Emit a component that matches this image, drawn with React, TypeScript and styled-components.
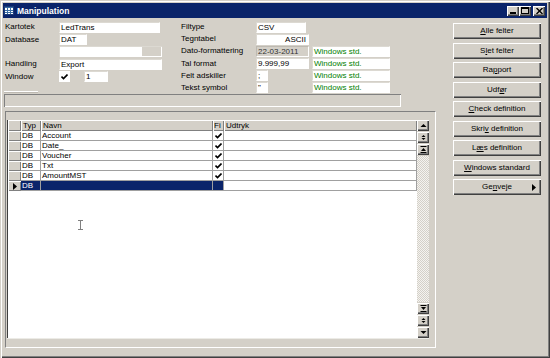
import React from "react";
import styled, { createGlobalStyle, css } from "styled-components";

const GlobalStyle = createGlobalStyle`
  html, body { margin: 0; padding: 0; background: #d4d0c8; }
  body {
    font-family: "Liberation Sans", Arial, sans-serif;
    font-size: 8px;
    color: #000;
  }
  * { box-sizing: border-box; }
`;

const raised = css`
  background: #d4d0c8;
  box-shadow: inset 1px 1px #fff, inset -1px -1px #404040, inset -2px -2px #808080;
`;

const Window = styled.div`
  position: relative;
  width: 550px;
  height: 358px;
  padding: 3px;
  background: #d4d0c8;
  box-shadow: inset 1px 1px #d4d0c8, inset 2px 2px #fff, inset -1px -1px #404040,
    inset -2px -2px #808080;
  display: flex;
  flex-direction: column;
  overflow: hidden;
`;

const TitleBar = styled.div`
  height: 15px;
  background: #0a246a;
  display: flex;
  align-items: center;
  padding: 0 2px 0 1px;
  color: #fff;
  font-weight: bold;
  font-size: 8.5px;
`;

const TitleText = styled.span`
  margin-left: 3px;
`;

const WinButtons = styled.div`
  margin-left: auto;
  display: flex;
  gap: 0;
`;

const WinButton = styled.div<{ $gap?: number }>`
  ${raised};
  width: 12px;
  height: 10px;
  margin-left: ${(p) => p.$gap || 0}px;
  display: flex;
  align-items: center;
  justify-content: center;
`;

const Main = styled.div`
  flex: 1;
  display: flex;
  padding-top: 3px;
`;

const LeftPane = styled.div`
  width: 432px;
  margin-left: 1px;
  display: flex;
  flex-direction: column;
`;

const FormArea = styled.div`
  height: 73px;
  display: flex;
`;

const LeftForm = styled.div`
  width: 177px;
  padding-left: 1px;
  display: flex;
  flex-direction: column;
`;

const MiddleForm = styled.div`
  display: flex;
  flex-direction: column;
`;

const Row = styled.div<{ $label: number }>`
  height: 12.4px;
  display: grid;
  grid-template-columns: ${(p) => p.$label}px auto;
  align-items: center;
`;

const Label = styled.span`
  white-space: nowrap;
  line-height: 10px;
`;

const Fields = styled.div`
  display: flex;
  align-items: center;
`;

const Field = styled.div<{ $w: number; $grey?: boolean; $right?: boolean }>`
  width: ${(p) => p.$w}px;
  height: 11px;
  line-height: 10px;
  padding: 0 2px 0 1px;
  white-space: nowrap;
  overflow: hidden;
  text-align: ${(p) => (p.$right ? "right" : "left")};
  background: ${(p) => (p.$grey ? "#d4d0c8" : "#fff")};
  color: ${(p) => (p.$grey ? "#333" : "#000")};
  border-top: 1px solid ${(p) => (p.$grey ? "#bdb9b1" : "#dcd9d2")};
  border-left: 1px solid ${(p) => (p.$grey ? "#bdb9b1" : "#dcd9d2")};
  border-right: 1px solid #fff;
  border-bottom: 1px solid #fff;
`;

const Slot = styled.div`
  width: 56px;
`;

const GreenBox = styled(Field)`
  color: #008000;
`;

const ComboBlank = styled.div`
  width: 103px;
  height: 11px;
  display: flex;
  border-top: 1px solid #dcd9d2;
  border-left: 1px solid #dcd9d2;
`;

const ComboWhite = styled.div`
  flex: 1;
  background: #fff;
`;

const ComboGrey = styled.div`
  width: 20px;
  background: #d4d0c8;
  border-right: 1px solid #fff;
  border-bottom: 1px solid #fff;
`;

const CheckBox = styled.div`
  width: 11px;
  height: 11px;
  background: #fff;
  display: flex;
  align-items: center;
  justify-content: center;
  margin-right: 14px;
`;

const Splitter = styled.div`
  width: 34px;
  height: 2px;
  margin-top: 8px;
  margin-left: -1px;
  border-top: 1px solid #fff;
  border-bottom: 1px solid #bdb9b1;
`;

const StatusPanel = styled.div`
  width: 397px;
  height: 13px;
  box-shadow: inset 1px 1px #808080, inset -1px -1px #fff;
`;

const GridFrame = styled.div`
  width: 431px;
  height: 237px;
  margin: 4px 0 0 1px;
  border-top: 1px solid #808080;
  border-left: 1px solid #808080;
  border-right: 1px solid #fff;
  border-bottom: 1px solid #fff;
  padding: 8px 6px 8px 1px;
`;

const Grid = styled.div`
  width: 422px;
  height: 219px;
  display: flex;
  border-bottom: 1px solid #ecebe6;
`;

const Table = styled.div`
  position: relative;
  flex: 1;
  background: #fff;
  border-left: 1px solid #404040;
  display: grid;
  grid-template-columns: 13px 20px 172px 11px 1fr;
  grid-template-rows: 11px;
  grid-auto-rows: 10px;
  align-content: start;
`;

const HeadCell = styled.div`
  ${raised};
  box-shadow: inset 1px 1px #fff, inset -1px -1px #808080;
  line-height: 11px;
  padding-left: 2px;
  white-space: nowrap;
  overflow: hidden;
`;

const Indicator = styled.div`
  background: #d4d0c8;
  box-shadow: inset 1px 1px #fff, inset -1px -1px #808080;
  display: flex;
  align-items: center;
  justify-content: center;
`;

const Cell = styled.div<{ $sel?: boolean; $center?: boolean }>`
  background: ${(p) => (p.$sel ? "#0a246a" : "#fff")};
  color: ${(p) => (p.$sel ? "#fff" : "#000")};
  border-right: 1px solid #a0a0a0;
  border-bottom: 1px solid #a0a0a0;
  line-height: 9px;
  padding-left: 1px;
  white-space: nowrap;
  overflow: hidden;
  display: flex;
  align-items: center;
  justify-content: ${(p) => (p.$center ? "center" : "flex-start")};
`;

const Cursor = styled.div`
  position: absolute;
  left: 70px;
  top: 100px;
`;

const ScrollBar = styled.div`
  width: 12px;
  display: flex;
  flex-direction: column;
`;

const ScrollBtn = styled.div<{ $top?: boolean }>`
  ${raised};
  height: 11px;
  flex: none;
  margin: ${(p) => (p.$top ? "0 0 1px" : "1px 0 0")};
  display: flex;
  align-items: center;
  justify-content: center;
`;

const Track = styled.div`
  flex: 1;
  background-color: #fff;
  background-image: repeating-conic-gradient(#d4d0c8 0 25%, #f4f3f0 0 50%);
  background-size: 2px 2px;
`;

const RightPane = styled.div`
  width: 88px;
  margin-left: 17px;
  padding-top: 2px;
  display: flex;
  flex-direction: column;
  gap: 3.5px;
`;

const Button = styled.div`
  ${raised};
  position: relative;
  height: 16px;
  display: flex;
  align-items: center;
  justify-content: center;
  white-space: nowrap;
  padding-bottom: 1px;
`;

const Arrow = styled.span`
  position: absolute;
  right: 5px;
  top: 5px;
  display: flex;
`;

const Check = () => (
  <svg width="7" height="6" viewBox="0 0 7 6">
    <path d="M0.5 2.5 L2.5 4.5 L6.5 0.5" fill="none" stroke="#000" strokeWidth="1.6" />
  </svg>
);

const Tri = ({ dir }: { dir: "up" | "down" | "right" }) => {
  if (dir === "right")
    return (
      <svg width="4" height="7" viewBox="0 0 4 7">
        <path d="M0 0 L4 3.5 L0 7 Z" fill="#000" />
      </svg>
    );
  return (
    <svg width="7" height="4" viewBox="0 0 7 4">
      <path d={dir === "up" ? "M0 4 L3.5 0 L7 4 Z" : "M0 0 L3.5 4 L7 0 Z"} fill="#000" />
    </svg>
  );
};

const ScrollGlyph = ({ kind }: { kind: "up" | "down" | "both" | "top" | "bottom" }) => (
  <svg width="7" height="7" viewBox="0 0 7 7">
    {kind === "up" && <path d="M0.5 5 L3.5 2 L6.5 5 Z" fill="#000" />}
    {kind === "down" && <path d="M0.5 2 L3.5 5 L6.5 2 Z" fill="#000" />}
    {kind === "both" && (
      <>
        <path d="M1.5 3 L3.5 1 L5.5 3 Z" fill="#000" />
        <path d="M1.5 4 L3.5 6 L5.5 4 Z" fill="#000" />
      </>
    )}
    {kind === "top" && (
      <>
        <rect x="0.5" y="0" width="6" height="1" fill="#000" />
        <path d="M1 5 L3.5 2 L6 5 Z" fill="#000" />
        <rect x="0.5" y="6" width="6" height="1" fill="#000" />
      </>
    )}
    {kind === "bottom" && (
      <>
        <rect x="0.5" y="0" width="6" height="1" fill="#000" />
        <path d="M1 2 L3.5 5 L6 2 Z" fill="#000" />
        <rect x="0.5" y="6" width="6" height="1" fill="#000" />
      </>
    )}
  </svg>
);

const rows = ["Account", "Date_", "Voucher", "Txt", "AmountMST"];

const buttons: [string, string, string][] = [
  ["", "A", "lle felter"],
  ["S", "l", "et felter"],
  ["Ra", "p", "port"],
  ["Udf", "ø", "r"],
  ["", "C", "heck definition"],
  ["Skri", "v", " definition"],
  ["L", "æ", "s definition"],
  ["", "W", "indows standard"],
  ["Ge", "n", "veje"],
];

export default function App() {
  return (
    <>
      <GlobalStyle />
      <Window>
        <TitleBar>
          <svg width="10" height="9" viewBox="0 0 10 9">
            <rect x="0" y="0" width="10" height="9" fill="#fff" />
            <rect x="0" y="0" width="10" height="2" fill="#3a6ea5" />
            <path d="M0 4.5 H10 M0 6.5 H10 M3.5 2 V9 M6.5 2 V9" stroke="#3a6ea5" strokeWidth="1" />
            <rect x="0.5" y="0.5" width="9" height="8" fill="none" stroke="#1c3c78" strokeWidth="1" />
          </svg>
          <TitleText>Manipulation</TitleText>
          <WinButtons>
            <WinButton>
              <svg width="6" height="6" viewBox="0 0 6 6">
                <rect x="0" y="4" width="6" height="2" fill="#000" />
              </svg>
            </WinButton>
            <WinButton>
              <svg width="8" height="7" viewBox="0 0 8 7">
                <rect x="0.5" y="0.5" width="7" height="6" fill="none" stroke="#000" />
                <rect x="0" y="0" width="8" height="2" fill="#000" />
              </svg>
            </WinButton>
            <WinButton $gap={2}>
              <svg width="7" height="6" viewBox="0 0 7 6">
                <path d="M0.5 0 L6.5 6 M6.5 0 L0.5 6" stroke="#000" strokeWidth="1.4" />
              </svg>
            </WinButton>
          </WinButtons>
        </TitleBar>

        <Main>
          <LeftPane>
            <FormArea>
              <LeftForm>
                <Row $label={54}>
                  <Label>Kartotek</Label>
                  <Field $w={101}>LedTrans</Field>
                </Row>
                <Row $label={54}>
                  <Label>Database</Label>
                  <Field $w={28}>DAT</Field>
                </Row>
                <Row $label={54}>
                  <Label />
                  <ComboBlank>
                    <ComboWhite />
                    <ComboGrey />
                  </ComboBlank>
                </Row>
                <Row $label={54}>
                  <Label>Handling</Label>
                  <Field $w={103}>Export</Field>
                </Row>
                <Row $label={54}>
                  <Label>Window</Label>
                  <Fields>
                    <CheckBox>
                      <Check />
                    </CheckBox>
                    <Field $w={24}>1</Field>
                  </Fields>
                </Row>
                <Splitter />
              </LeftForm>

              <MiddleForm>
                <Row $label={75}>
                  <Label>Filtype</Label>
                  <Field $w={50}>CSV</Field>
                </Row>
                <Row $label={75}>
                  <Label>Tegntabel</Label>
                  <Field $w={53} $right>
                    ASCII
                  </Field>
                </Row>
                <Row $label={75}>
                  <Label>Dato-formattering</Label>
                  <Fields>
                    <Slot>
                      <Field $w={53} $grey>
                        22-03-2011
                      </Field>
                    </Slot>
                    <GreenBox $w={78}>Windows std.</GreenBox>
                  </Fields>
                </Row>
                <Row $label={75}>
                  <Label>Tal format</Label>
                  <Fields>
                    <Slot>
                      <Field $w={53}>9.999,99</Field>
                    </Slot>
                    <GreenBox $w={78}>Windows std.</GreenBox>
                  </Fields>
                </Row>
                <Row $label={75}>
                  <Label>Felt adskiller</Label>
                  <Fields>
                    <Slot>
                      <Field $w={12}>;</Field>
                    </Slot>
                    <GreenBox $w={78}>Windows std.</GreenBox>
                  </Fields>
                </Row>
                <Row $label={75}>
                  <Label>Tekst symbol</Label>
                  <Fields>
                    <Slot>
                      <Field $w={12}>"</Field>
                    </Slot>
                    <GreenBox $w={78}>Windows std.</GreenBox>
                  </Fields>
                </Row>
              </MiddleForm>
            </FormArea>

            <StatusPanel />

            <GridFrame>
              <Grid>
                <Table>
                  <HeadCell />
                  <HeadCell>Typ</HeadCell>
                  <HeadCell>Navn</HeadCell>
                  <HeadCell style={{ paddingLeft: 1 }}>Fi</HeadCell>
                  <HeadCell>Udtryk</HeadCell>
                  {rows.map((name) => (
                    <React.Fragment key={name}>
                      <Indicator />
                      <Cell>DB</Cell>
                      <Cell>{name}</Cell>
                      <Cell $center>
                        <Check />
                      </Cell>
                      <Cell />
                    </React.Fragment>
                  ))}
                  <Indicator>
                    <Tri dir="right" />
                  </Indicator>
                  <Cell $sel>DB</Cell>
                  <Cell $sel />
                  <Cell $sel />
                  <Cell />
                  <Cursor>
                    <svg width="5" height="10" viewBox="0 0 5 10">
                      <path d="M0 0.5 H5 M0 9.5 H5 M2.5 0 V10" stroke="#808080" strokeWidth="1" />
                    </svg>
                  </Cursor>
                </Table>
                <ScrollBar>
                  <ScrollBtn $top>
                    <ScrollGlyph kind="up" />
                  </ScrollBtn>
                  <ScrollBtn $top>
                    <ScrollGlyph kind="both" />
                  </ScrollBtn>
                  <ScrollBtn $top>
                    <ScrollGlyph kind="top" />
                  </ScrollBtn>
                  <Track />
                  <ScrollBtn>
                    <ScrollGlyph kind="bottom" />
                  </ScrollBtn>
                  <ScrollBtn>
                    <ScrollGlyph kind="both" />
                  </ScrollBtn>
                  <ScrollBtn>
                    <ScrollGlyph kind="down" />
                  </ScrollBtn>
                </ScrollBar>
              </Grid>
            </GridFrame>
          </LeftPane>

          <RightPane>
            {buttons.map(([a, u, b], i) => (
              <Button key={i}>
                <span>
                  {a}
                  <u>{u}</u>
                  {b}
                </span>
                {i === buttons.length - 1 && (
                  <Arrow>
                    <Tri dir="right" />
                  </Arrow>
                )}
              </Button>
            ))}
          </RightPane>
        </Main>
      </Window>
    </>
  );
}
